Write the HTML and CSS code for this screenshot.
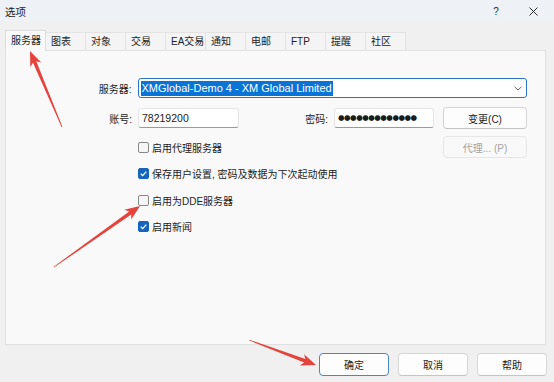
FILE: index.html
```html
<!DOCTYPE html>
<html lang="zh">
<head>
<meta charset="utf-8">
<title>选项</title>
<link rel="stylesheet" href="styles.css">
</head>
<body>
<div class="titlebar">
  <span class="title">选项</span>
  <span class="tb-help">?</span>
  <svg class="tb-close" width="9" height="9" viewBox="0 0 9 9"><path d="M0.5 0.5 L8.5 8.5 M8.5 0.5 L0.5 8.5" stroke="#2b2b2b" stroke-width="1" fill="none"/></svg>
</div>
<div class="content">
  <div class="tabs">
    <div class="tab active">服务器</div>
    <div class="tab">图表</div>
    <div class="tab">对象</div>
    <div class="tab">交易</div>
    <div class="tab">EA交易</div>
    <div class="tab">通知</div>
    <div class="tab">电邮</div>
    <div class="tab">FTP</div>
    <div class="tab">提醒</div>
    <div class="tab">社区</div>
  </div>
  <div class="panel">
    <div class="form">
      <div class="row r1">
        <span class="lbl">服务器:</span>
        <div class="combo">
          <span class="sel">XMGlobal-Demo 4 - XM Global Limited</span>
          <svg class="chev" width="8" height="5" viewBox="0 0 8 5"><path d="M0.5 0.8 L4 4 L7.5 0.8" stroke="#666" stroke-width="1" fill="none"/></svg>
        </div>
      </div>
      <div class="row r2">
        <span class="lbl">账号:</span>
        <div class="input">78219200</div>
        <span class="lbl lbl-pw">密码:</span>
        <div class="input pw">●●●●●●●●●●●●●</div>
        <button class="btn">变更(C)</button>
      </div>
      <div class="row r3 check-row">
        <span class="cb"></span><span>启用代理服务器</span>
        <button class="btn disabled" disabled>代理... (P)</button>
      </div>
      <div class="row r4 check-row">
        <span class="cb on"><svg width="9" height="9" viewBox="0 0 9 9"><path d="M1.8 4.7 L3.7 6.6 L7.3 2.6" stroke="#fff" stroke-width="1.3" fill="none"/></svg></span><span>保存用户设置, 密码及数据为下次起动使用</span>
      </div>
      <div class="row r5 check-row">
        <span class="cb"></span><span>启用为DDE服务器</span>
      </div>
      <div class="row r6 check-row">
        <span class="cb on"><svg width="9" height="9" viewBox="0 0 9 9"><path d="M1.8 4.7 L3.7 6.6 L7.3 2.6" stroke="#fff" stroke-width="1.3" fill="none"/></svg></span><span>启用新闻</span>
      </div>
    </div>
  </div>
  <div class="actions">
    <button class="btn act primary">确定</button>
    <button class="btn act">取消</button>
    <button class="btn act">帮助</button>
  </div>
</div>
<svg class="annotations" width="554" height="382" viewBox="0 0 554 382">
  <polygon fill="#e5433d" points="62.37,126.84 36.32,61.36 41.3,62.5 30,51 30.3,67.1 33.0,62.76 61.63,127.16"/>
  <polygon fill="#e5433d" points="54.23,267.33 131.25,214.42 131.23,219.58 140,206 124.29,209.78 129.17,211.48 53.77,266.67"/>
  <polygon fill="#e5433d" points="248.86,340.37 304.13,362.49 299.84,365.38 316,365 304.04,354.14 305.39,359.11 249.14,339.63"/>
</svg>
</body>
</html>
```

FILE: styles.css
```css
* { box-sizing: border-box; }
html, body { margin: 0; padding: 0; }
body {
  width: 554px;
  height: 382px;
  overflow: hidden;
  position: relative;
  background: #f0f0f0;
  font-family: "Liberation Sans", "Noto Sans CJK SC", sans-serif;
  font-size: 10px;
  color: #1b1b1b;
}
.titlebar {
  height: 22px;
  background: #eef1f6;
  display: flex;
  align-items: center;
  padding-left: 5px;
  padding-right: 16px;
}
.title { flex: 1; font-size: 10.5px; }
.tb-help { width: 10px; text-align: center; font-size: 10px; margin-right: 28px; color: #2b2b2b; }
.tb-close { display: block; }

.content { padding: 8px 8px 0 5px; }
.tabs { display: flex; align-items: flex-end; height: 20px; }
.tab {
  width: 40px;
  height: 18px;
  padding-left: 5px;
  line-height: 17px;
  background: #f4f4f4;
  border-top: 1px solid #e3e3e3;
  border-right: 1px solid #e3e3e3;
  color: #222;
  white-space: nowrap;
}
.tab.active {
  width: 41px;
  height: 21px;
  line-height: 19px;
  background: #f9f9f9;
  border: 1px solid #dcdcdc;
  border-bottom: none;
  margin-bottom: -1px;
  position: relative;
  z-index: 1;
}
.panel {
  height: 295px;
  background: #f9f9f9;
  border: 1px solid #e0e0e0;
}
.form { width: 521px; padding-top: 27px; }
.row { display: flex; align-items: center; }
.r1 { height: 20px; }
.r2 { height: 22px; margin-top: 9px; }
.r3 { height: 22px; margin-top: 7px; }
.r4 { height: 22px; margin-top: 4px; }
.r5 { height: 22px; margin-top: 5px; }
.r6 { height: 22px; margin-top: 4px; }
.lbl { width: 126px; margin-right: 6px; text-align: right; }
.lbl.lbl-pw { width: 89px; }
.combo {
  width: 391px;
  height: 20px;
  background: #fff;
  border: 1px solid #2a74c2;
  border-radius: 3px;
  display: flex;
  align-items: center;
  padding: 0 4px 0 2px;
}
.sel {
  background: #0a74d6;
  color: #fff;
  font-size: 11px;
  height: 15px;
  line-height: 15px;
  padding: 0 1px;
  white-space: nowrap;
}
.chev { margin-left: auto; display: block; }
.input {
  width: 101px;
  height: 20px;
  background: #fff;
  border: 1px solid #e6e6e6;
  border-bottom-color: #9a9a9a;
  border-radius: 3px;
  padding-left: 3px;
  line-height: 18px;
  font-size: 10.5px;
  white-space: nowrap;
}
.input.pw {
  width: 100px;
  font-family: "DejaVu Sans", sans-serif;
  font-size: 7.5px;
  letter-spacing: -0.5px;
  line-height: 18px;
}
.btn {
  width: 84px;
  height: 22px;
  margin-left: 9px;
  padding: 0;
  font: inherit;
  color: #1b1b1b;
  background: #fdfdfd;
  border: 1px solid #d6d6d6;
  border-bottom-color: #c4c4c4;
  border-radius: 4px;
}
.btn.disabled {
  margin-left: auto;
  background: #f9f9f9;
  border-color: #e6e6e6;
  color: #a3a3a3;
}
.check-row { padding-left: 132px; }
.cb {
  width: 11px;
  height: 11px;
  border: 1px solid #888;
  border-radius: 2px;
  background: #f6f6f6;
  margin-right: 3px;
  display: flex;
  align-items: center;
  justify-content: center;
}
.cb.on { background: #1664bb; border-color: #1664bb; }
.cb svg { display: block; }
.actions {
  display: flex;
  justify-content: flex-end;
  gap: 9px;
  margin-top: 8px;
  margin-right: -1px;
}
.btn.act { width: 70px; height: 23px; margin-left: 0; }
.btn.primary { border-color: #4a86c6; }
.annotations { position: absolute; left: 0; top: 0; pointer-events: none; }
```
